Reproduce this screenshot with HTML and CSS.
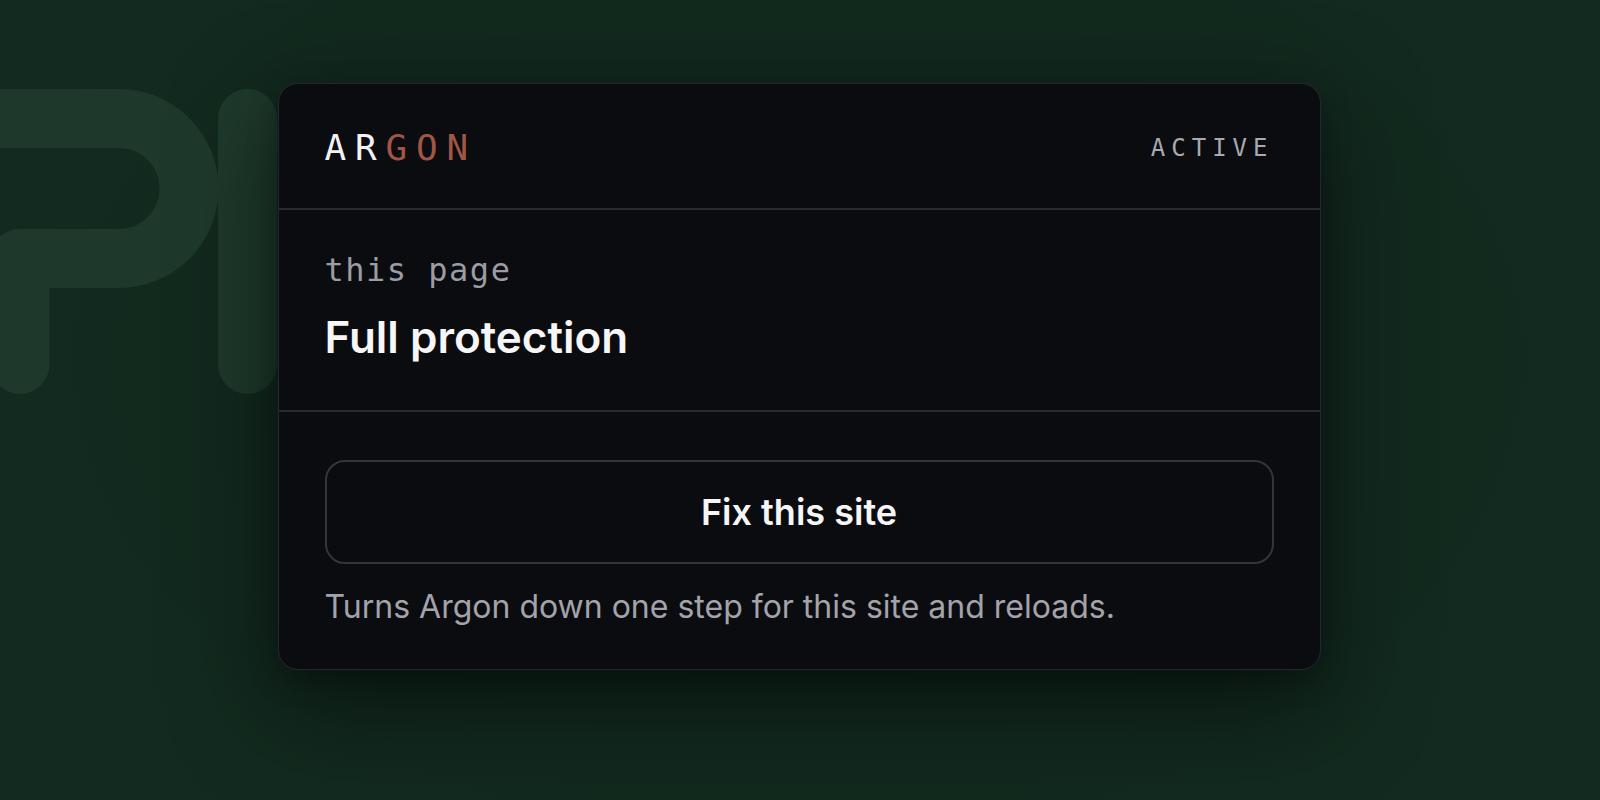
FILE: index.html
```html
<!DOCTYPE html>
<html lang="en">
<head>
<meta charset="utf-8">
<title>Argon</title>
<link rel="stylesheet" href="styles.css">
</head>
<body>
<div class="page">
  <svg class="backdrop" width="300" height="420" viewBox="0 0 300 420" aria-hidden="true">
    <path class="glyph" d="M -100 118.5 H 119 A 70 70 0 0 1 119 258.5 H 20 V 364.5"/>
    <path class="glyph" d="M 247.5 118.5 V 364.5"/>
  </svg>
  <main class="card">
    <header class="card-head">
      <div class="brand"><span class="brand-light">AR</span><span class="brand-accent">GON</span></div>
      <div class="status">ACTIVE</div>
    </header>
    <section class="card-info">
      <div class="scope">this page</div>
      <h1 class="level">Full protection</h1>
    </section>
    <section class="card-action">
      <button class="fix-btn" type="button">Fix this site</button>
      <p class="hint">Turns Argon down one step for this site and reloads.</p>
    </section>
  </main>
</div>
</body>
</html>
```

FILE: styles.css
```css
* { box-sizing: border-box; }

html, body {
  margin: 0;
  padding: 0;
  width: 1600px;
  height: 800px;
  overflow: hidden;
}

body {
  background: radial-gradient(ellipse 900px 600px at 50% 45%, #11281c 0%, #12291e 60%, #122a1f 100%);
  font-family: Inter, "Noto Sans", sans-serif;
}

.page {
  position: relative;
  width: 1600px;
  height: 800px;
  display: flex;
  justify-content: center;
  align-items: flex-start;
  padding-top: 83px;
  padding-right: 2px;
}

.backdrop {
  position: absolute;
  left: 0;
  top: 0;
}

.glyph {
  fill: none;
  stroke: #1e392b;
  stroke-width: 59;
  stroke-linecap: round;
  stroke-linejoin: round;
}

.card {
  position: relative;
  width: 1043px;
  background: #0b0c10;
  border: 1px solid #26272c;
  border-radius: 20px;
  box-shadow: 0 34px 100px rgba(0, 0, 0, 0.5), 0 10px 30px rgba(0, 0, 0, 0.25);
  display: flex;
  flex-direction: column;
}

.card-head {
  height: 126px;
  padding: 0 46px 0 46px;
  display: flex;
  align-items: center;
  justify-content: space-between;
  border-bottom: 2px solid #2a2b30;
}

.brand {
  font-family: "DejaVu Sans Mono", "Liberation Mono", monospace;
  font-size: 36px;
  letter-spacing: 8.8px;
  line-height: 40px;
  margin-top: 4px;
}

.brand-light { color: #f2f2f4; }
.brand-accent { color: #a05645; }

.status {
  font-family: "DejaVu Sans Mono", "Liberation Mono", monospace;
  font-size: 24px;
  letter-spacing: 6px;
  color: #a9a9b0;
  line-height: 30px;
  margin-top: 4px;
}

.card-info {
  padding: 40px 46px 49px;
  border-bottom: 2px solid #2a2b30;
  display: flex;
  flex-direction: column;
  gap: 23px;
}

.scope {
  font-family: "DejaVu Sans Mono", "Liberation Mono", monospace;
  font-size: 32px;
  line-height: 40px;
  letter-spacing: 1.5px;
  color: #9c9ca4;
}

.level {
  margin: 0;
  font-family: Inter, "Noto Sans", sans-serif;
  font-size: 44px;
  line-height: 48px;
  font-weight: 600;
  color: #f6f6f7;
}

.card-action {
  padding: 48px 46px 44px;
  display: flex;
  flex-direction: column;
  gap: 25px;
}

.fix-btn {
  height: 104px;
  width: 100%;
  background: transparent;
  border: 2px solid #33353b;
  border-radius: 20px;
  color: #f6f6f7;
  font-family: Inter, "Noto Sans", sans-serif;
  font-size: 36px;
  font-weight: 600;
  display: flex;
  align-items: center;
  justify-content: center;
  padding: 0;
}

.hint {
  margin: 0;
  font-family: Inter, "Noto Sans", sans-serif;
  font-size: 32px;
  line-height: 36px;
  color: #a3a3ab;
}
```
